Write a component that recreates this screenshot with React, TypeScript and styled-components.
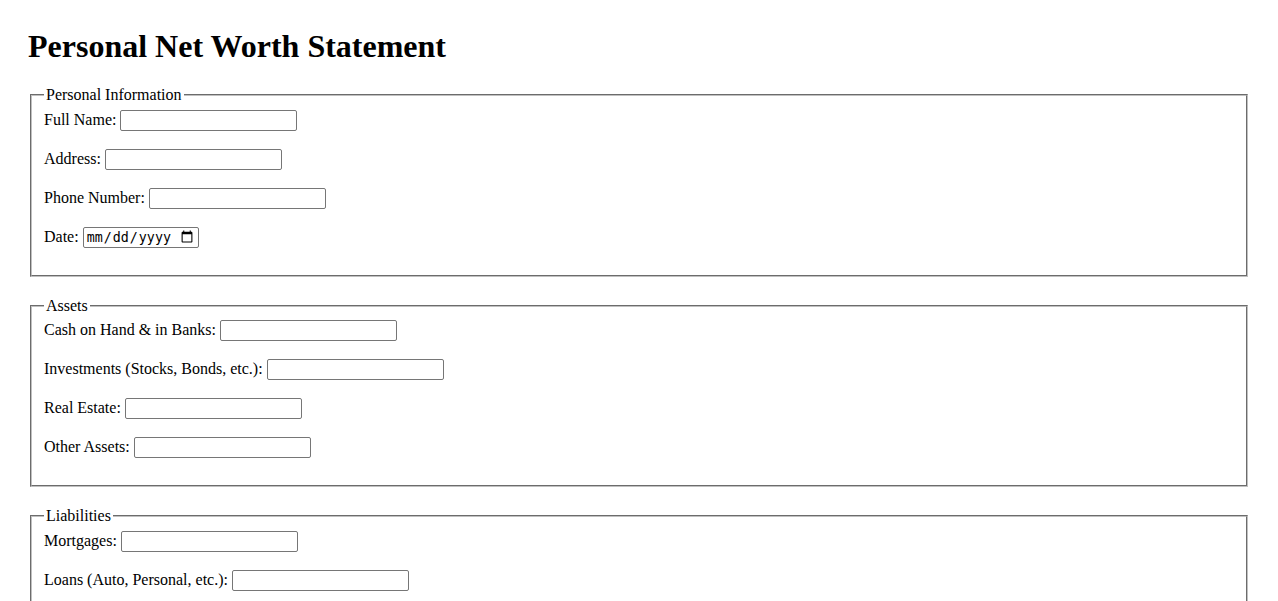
import React from "react";
import styled, { createGlobalStyle } from "styled-components";

const Global = createGlobalStyle`
  body {
    margin: 28px;
    font-family: "Liberation Serif", "Times New Roman", serif;
    font-size: 16px;
    color: #000;
    background: #fff;
  }
`;

const Title = styled.h1`
  font-size: 32px;
  font-weight: bold;
  margin: 0 0 21px;
`;

const Section = styled.fieldset`
  margin: 0 2px 20px;
  padding: 0.35em 0.75em 9px;
  border: 2px groove rgb(192, 192, 192);
`;

const Legend = styled.legend`
  padding: 0 2px;
`;

const Row = styled.div`
  min-height: 23px;
  margin-bottom: 16px;
`;

const Label = styled.label`
  font-size: 16px;
`;

const Field = styled.input<{ $w?: number }>`
  box-sizing: border-box;
  width: ${(p) => p.$w ?? 177}px;
  height: 21px;
  border: 1px solid #767676;
  border-radius: 2px;
  padding: 1px 2px;
  font-size: 13.33px;
  vertical-align: baseline;
`;

type F = { id: string; label: string; type?: string };

const sections: { title: string; fields: F[] }[] = [
  {
    title: "Personal Information",
    fields: [
      { id: "name", label: "Full Name:" },
      { id: "address", label: "Address:" },
      { id: "phone", label: "Phone Number:" },
      { id: "date", label: "Date:", type: "date" },
    ],
  },
  {
    title: "Assets",
    fields: [
      { id: "cash", label: "Cash on Hand & in Banks:" },
      { id: "investments", label: "Investments (Stocks, Bonds, etc.):" },
      { id: "realestate", label: "Real Estate:" },
      { id: "otherassets", label: "Other Assets:" },
    ],
  },
  {
    title: "Liabilities",
    fields: [
      { id: "mortgages", label: "Mortgages:" },
      { id: "loans", label: "Loans (Auto, Personal, etc.):" },
      { id: "credit", label: "Credit Card Debt:" },
      { id: "otherliab", label: "Other Liabilities:" },
    ],
  },
];

export default function App() {
  return (
    <>
      <Global />
      <Title>Personal Net Worth Statement</Title>
      <form>
        {sections.map((s) => (
          <Section key={s.title}>
            <Legend>{s.title}</Legend>
            {s.fields.map((f) => (
              <Row key={f.id}>
                <Label htmlFor={f.id}>{f.label}</Label>{" "}
                <Field
                  id={f.id}
                  type={f.type ?? "text"}
                  $w={f.type === "date" ? 116 : 177}
                />
              </Row>
            ))}
          </Section>
        ))}
      </form>
    </>
  );
}
